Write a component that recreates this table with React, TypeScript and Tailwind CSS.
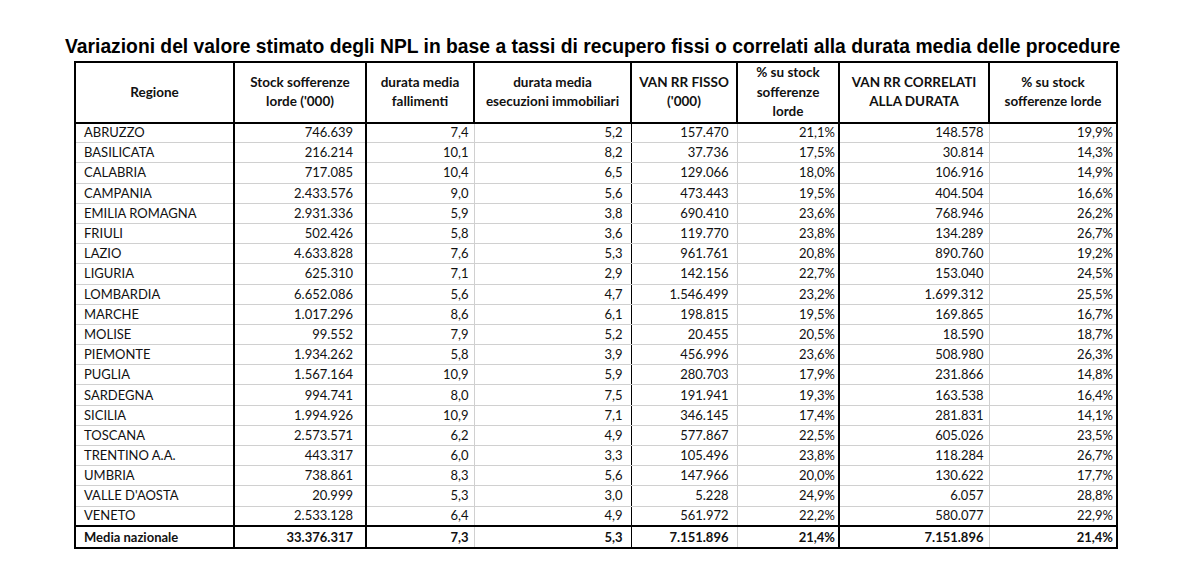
import React from "react";

type Row = [string, string, string, string, string, string, string, string];

const rows: Row[] = [
  ["ABRUZZO", "746.639", "7,4", "5,2", "157.470", "21,1%", "148.578", "19,9%"],
  ["BASILICATA", "216.214", "10,1", "8,2", "37.736", "17,5%", "30.814", "14,3%"],
  ["CALABRIA", "717.085", "10,4", "6,5", "129.066", "18,0%", "106.916", "14,9%"],
  ["CAMPANIA", "2.433.576", "9,0", "5,6", "473.443", "19,5%", "404.504", "16,6%"],
  ["EMILIA ROMAGNA", "2.931.336", "5,9", "3,8", "690.410", "23,6%", "768.946", "26,2%"],
  ["FRIULI", "502.426", "5,8", "3,6", "119.770", "23,8%", "134.289", "26,7%"],
  ["LAZIO", "4.633.828", "7,6", "5,3", "961.761", "20,8%", "890.760", "19,2%"],
  ["LIGURIA", "625.310", "7,1", "2,9", "142.156", "22,7%", "153.040", "24,5%"],
  ["LOMBARDIA", "6.652.086", "5,6", "4,7", "1.546.499", "23,2%", "1.699.312", "25,5%"],
  ["MARCHE", "1.017.296", "8,6", "6,1", "198.815", "19,5%", "169.865", "16,7%"],
  ["MOLISE", "99.552", "7,9", "5,2", "20.455", "20,5%", "18.590", "18,7%"],
  ["PIEMONTE", "1.934.262", "5,8", "3,9", "456.996", "23,6%", "508.980", "26,3%"],
  ["PUGLIA", "1.567.164", "10,9", "5,9", "280.703", "17,9%", "231.866", "14,8%"],
  ["SARDEGNA", "994.741", "8,0", "7,5", "191.941", "19,3%", "163.538", "16,4%"],
  ["SICILIA", "1.994.926", "10,9", "7,1", "346.145", "17,4%", "281.831", "14,1%"],
  ["TOSCANA", "2.573.571", "6,2", "4,9", "577.867", "22,5%", "605.026", "23,5%"],
  ["TRENTINO A.A.", "443.317", "6,0", "3,3", "105.496", "23,8%", "118.284", "26,7%"],
  ["UMBRIA", "738.861", "8,3", "5,6", "147.966", "20,0%", "130.622", "17,7%"],
  ["VALLE D'AOSTA", "20.999", "5,3", "3,0", "5.228", "24,9%", "6.057", "28,8%"],
  ["VENETO", "2.533.128", "6,4", "4,9", "561.972", "22,2%", "580.077", "22,9%"],
];

const total: Row = ["Media nazionale", "33.376.317", "7,3", "5,3", "7.151.896", "21,4%", "7.151.896", "21,4%"];

const widths = [159, 132, 108, 157, 106, 102, 150, 128];

// right border + padding per column in the body
const cellCls = [
  "text-left pl-[8px] border-r-2 border-r-black",
  "text-right pr-[12px] border-r-2 border-r-black",
  "text-right pr-[5px] border-r border-r-[#d0d0d0]",
  "text-right pr-[8px] border-r border-r-black",
  "text-right pr-[8px] border-r border-r-[#d0d0d0]",
  "text-right pr-[3px] border-r-2 border-r-black",
  "text-right pr-[5px] border-r border-r-[#d0d0d0]",
  "text-right pr-[3px] border-r-2 border-r-black",
];

const headers: React.ReactNode[] = [
  "Regione",
  <>Stock sofferenze<br />lorde ('000)</>,
  <>durata media<br />fallimenti</>,
  <>durata media<br />esecuzioni immobiliari</>,
  <>VAN RR FISSO<br />('000)</>,
  <>% su stock<br />sofferenze<br />lorde</>,
  <>VAN RR CORRELATI<br />ALLA DURATA</>,
  <>% su stock<br />sofferenze lorde</>,
];

export default function App() {
  return (
    <div className="w-[1182px] h-[567px] bg-white text-black overflow-hidden">
      <h1 className="pt-[36px] pl-[65px] font-['Liberation_Sans',Arial,sans-serif] font-bold text-[19.3px] leading-[22px] whitespace-nowrap">
        Variazioni del valore stimato degli NPL in base a tassi di recupero fissi o correlati alla durata media delle procedure
      </h1>
      <table className="ml-[74px] mt-[3px] w-[1042px] table-fixed border-collapse border-2 border-black font-['Lato',sans-serif] text-[13px] text-[#111]">
        <colgroup>
          {widths.map((w, i) => (
            <col key={i} style={{ width: w }} />
          ))}
        </colgroup>
        <thead>
          <tr className="h-[60px]">
            {headers.map((h, i) => (
              <th key={i} className="border-2 border-black font-bold text-[13.5px] text-center align-middle leading-[19.5px] px-1">
                {h}
              </th>
            ))}
          </tr>
        </thead>
        <tbody>
          {rows.map((r) => (
            <tr key={r[0]} className="h-[20.2px]">
              {r.map((v, i) => (
                <td key={i} className={`${cellCls[i]} border-b border-b-[#d0d0d0] leading-none py-0 whitespace-nowrap`}>
                  {v}
                </td>
              ))}
            </tr>
          ))}
          <tr className="h-[22px]">
            {total.map((v, i) => (
              <td key={i} className={`${cellCls[i]} border-t-2 border-t-black font-bold leading-none py-0 whitespace-nowrap`}>
                {v}
              </td>
            ))}
          </tr>
        </tbody>
      </table>
    </div>
  );
}
